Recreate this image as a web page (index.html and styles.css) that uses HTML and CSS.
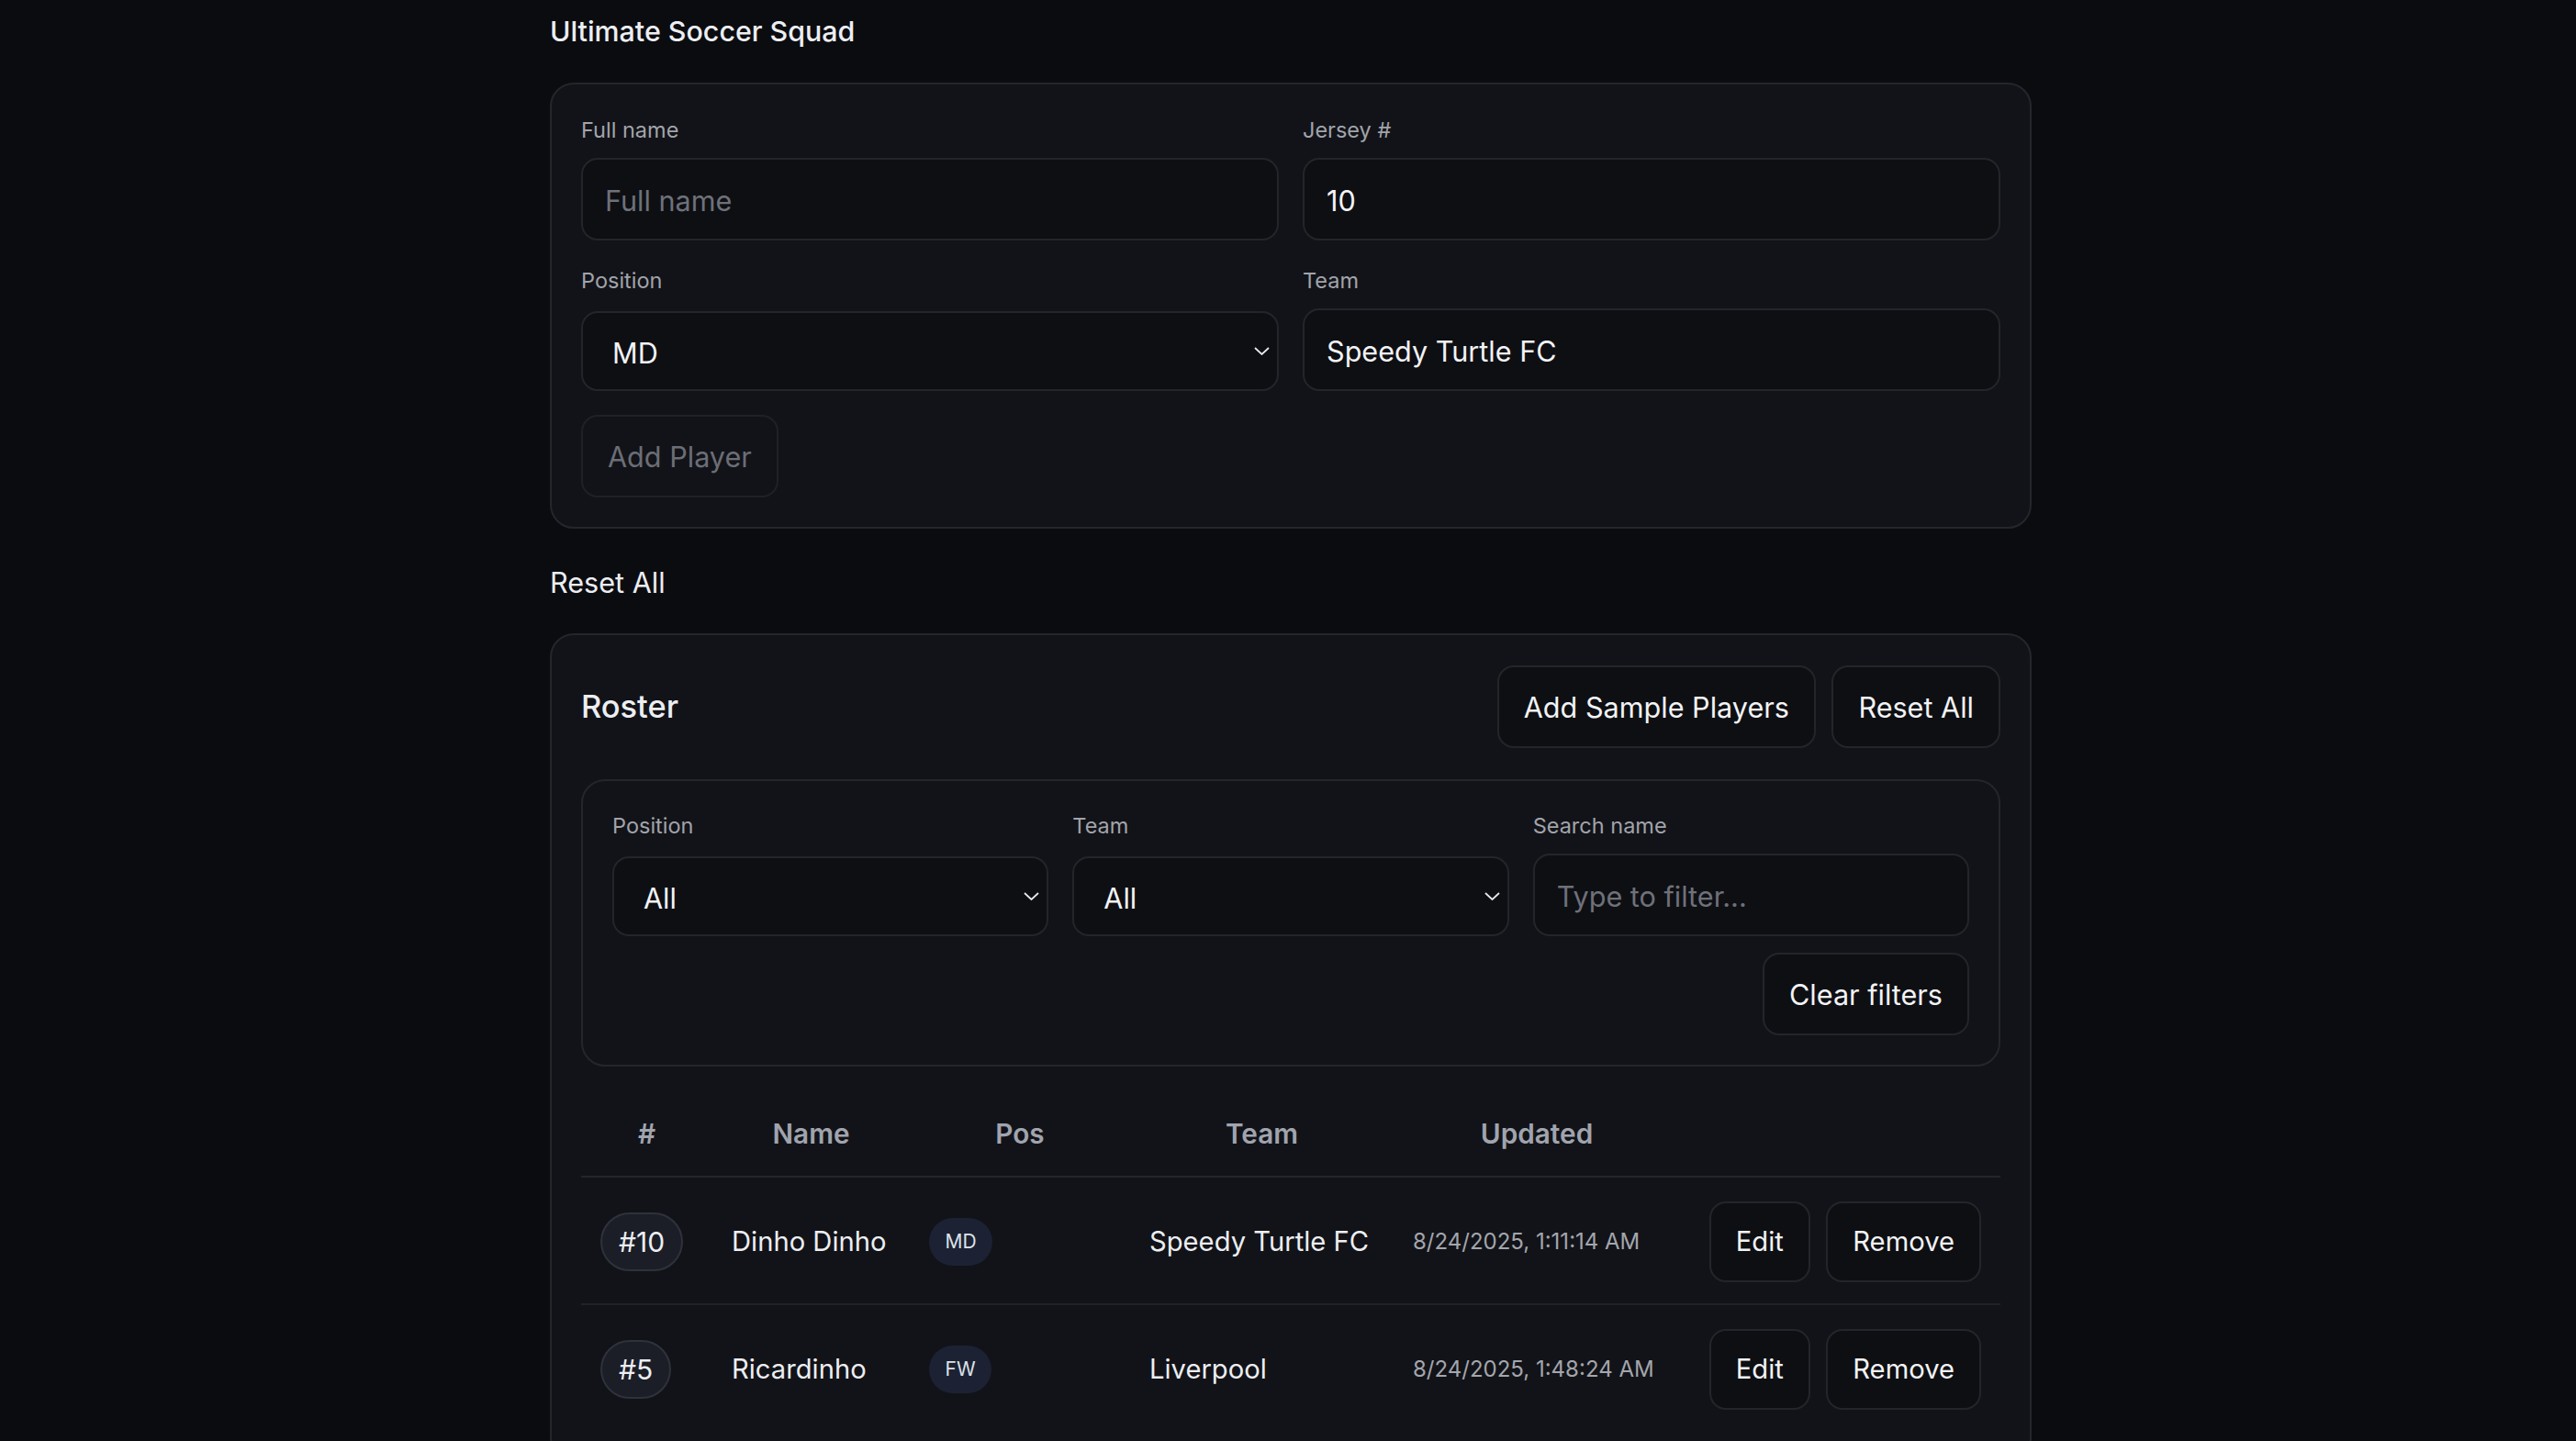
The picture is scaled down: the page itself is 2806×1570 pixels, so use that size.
FILE: index.html
```html
<!DOCTYPE html>
<html lang="en">
<head>
<meta charset="utf-8">
<title>Ultimate Soccer Squad</title>
<link rel="stylesheet" href="styles.css">
</head>
<body>
<div class="app">
  <h1 class="app-title">Ultimate Soccer Squad</h1>

  <form class="card player-form">
    <div class="form-grid">
      <label class="field">
        <span class="field-label">Full name</span>
        <input class="control" type="text" placeholder="Full name">
      </label>
      <label class="field">
        <span class="field-label">Jersey #</span>
        <input class="control" type="text" value="10">
      </label>
      <label class="field">
        <span class="field-label">Position</span>
        <select class="control select"><option>MD</option></select>
      </label>
      <label class="field">
        <span class="field-label">Team</span>
        <input class="control" type="text" value="Speedy Turtle FC">
      </label>
    </div>
    <div class="form-actions">
      <button class="btn" type="button" disabled>Add Player</button>
    </div>
  </form>

  <div class="plain-text">Reset All</div>

  <section class="card roster">
    <div class="roster-header">
      <h2 class="roster-title">Roster</h2>
      <div class="btn-group">
        <button class="btn" type="button">Add Sample Players</button>
        <button class="btn" type="button">Reset All</button>
      </div>
    </div>

    <div class="filters">
      <div class="filter-grid">
        <label class="field">
          <span class="field-label">Position</span>
          <select class="control select"><option>All</option></select>
        </label>
        <label class="field">
          <span class="field-label">Team</span>
          <select class="control select"><option>All</option></select>
        </label>
        <label class="field">
          <span class="field-label">Search name</span>
          <input class="control" type="text" placeholder="Type to filter...">
        </label>
      </div>
      <div class="filter-actions">
        <button class="btn" type="button">Clear filters</button>
      </div>
    </div>

    <table class="roster-table">
      <colgroup>
        <col class="col-num">
        <col class="col-name">
        <col class="col-pos">
        <col class="col-team">
        <col class="col-updated">
        <col class="col-actions">
      </colgroup>
      <thead>
        <tr>
          <th>#</th>
          <th>Name</th>
          <th>Pos</th>
          <th>Team</th>
          <th>Updated</th>
          <th></th>
        </tr>
      </thead>
      <tbody>
        <tr>
          <td><span class="num-badge">#10</span></td>
          <td>Dinho Dinho</td>
          <td><span class="pos-badge">MD</span></td>
          <td>Speedy Turtle FC</td>
          <td class="date">8/24/2025, 1:11:14 AM</td>
          <td><div class="row-actions"><button class="btn btn-row" type="button">Edit</button><button class="btn btn-row" type="button">Remove</button></div></td>
        </tr>
        <tr>
          <td><span class="num-badge">#5</span></td>
          <td>Ricardinho</td>
          <td><span class="pos-badge">FW</span></td>
          <td>Liverpool</td>
          <td class="date">8/24/2025, 1:48:24 AM</td>
          <td><div class="row-actions"><button class="btn btn-row" type="button">Edit</button><button class="btn btn-row" type="button">Remove</button></div></td>
        </tr>
      </tbody>
    </table>
  </section>
</div>
</body>
</html>
```

FILE: styles.css
```css
* {
  box-sizing: border-box;
}

html {
  overflow: hidden;
  background: #0b0c10;
}

body {
  margin: 0;
  background: #0b0c10;
  color: #eceef2;
  font-family: Inter, "Noto Sans", "Liberation Sans", sans-serif;
  font-size: 30.6px;
  line-height: 1.5;
}

.app {
  width: 1614px;
  margin-left: calc(50% - 804px);
}

.app-title {
  margin: 10.5px 0 32.5px;
  font-size: 30.4px;
  line-height: 47px;
  font-weight: 500;
}

.card {
  background: #121318;
  border: 2px solid #24262c;
  border-radius: 26px;
  padding: 33px 32px 32px;
}

.form-grid {
  display: grid;
  grid-template-columns: 1fr 1fr;
  column-gap: 26px;
  row-gap: 27px;
}

.field {
  display: flex;
  flex-direction: column;
  gap: 12.5px;
}

.field-label {
  font-size: 23.5px;
  line-height: 34.5px;
  color: #a1a4ab;
}

.control {
  display: block;
  width: 100%;
  height: 90px;
  margin: 0;
  padding: 2px 24px 0;
  background: #0e0f13;
  border: 2px solid #23252b;
  border-radius: 18px;
  color: #f2f3f5;
  font-family: inherit;
  font-size: 30.6px;
  outline: none;
}

.control::placeholder {
  color: #6e717a;
}

.select {
  appearance: none;
  -webkit-appearance: none;
  height: 87px;
  margin-top: auto;
  padding: 4px 24px 0 32px;
  background-image: url("data:image/svg+xml,%3Csvg xmlns='http://www.w3.org/2000/svg' width='17' height='9' viewBox='0 0 17 9'%3E%3Cpath d='M1 1l7.5 7 7.5-7' fill='none' stroke='%23e5e7eb' stroke-width='1.8'/%3E%3C/svg%3E");
  background-repeat: no-repeat;
  background-position: right 8px center;
  background-size: 17px 9px;
}

.form-actions {
  margin-top: 26px;
  display: flex;
}

.btn {
  height: 90px;
  margin: 0;
  padding: 0 27px;
  background: #0e0f13;
  border: 2px solid #23252b;
  border-radius: 18px;
  color: #f2f3f5;
  font-family: inherit;
  font-size: 30.6px;
  white-space: nowrap;
}

.btn:disabled {
  background: #121318;
  border-color: #1f2126;
  color: #6b6e76;
}

.plain-text {
  margin: 35px 0 32px;
  line-height: 47px;
}

.roster-header {
  display: flex;
  justify-content: space-between;
  align-items: center;
}

.roster-title {
  margin: 0;
  font-size: 34.4px;
  font-weight: 500;
  line-height: 1.2;
}

.btn-group {
  display: flex;
  gap: 17.5px;
}

.filters {
  margin-top: 34px;
  background: #121318;
  border: 2px solid #24262c;
  border-radius: 26px;
  padding: 32px;
}

.filter-grid {
  display: grid;
  grid-template-columns: repeat(3, 1fr);
  column-gap: 26px;
}

.filter-actions {
  display: flex;
  justify-content: flex-end;
  margin-top: 18px;
}

.roster-table {
  width: 100%;
  margin-top: 32.5px;
  border-collapse: collapse;
  table-layout: fixed;
}

.col-num { width: 143px; }
.col-name { width: 215px; }
.col-pos { width: 240px; }
.col-team { width: 287px; }
.col-updated { width: 312px; }

.roster-table th {
  padding: 19.5px 21px 24.5px;
  font-size: 29.75px;
  font-weight: 600;
  line-height: 42px;
  color: #a0a4ae;
  text-align: center;
  border-bottom: 2px solid #23252b;
}

.roster-table td {
  padding: 26px 21px 23px;
  font-size: 29.2px;
  line-height: 42px;
  vertical-align: middle;
  white-space: nowrap;
  border-bottom: 2px solid #202228;
}

.roster-table tbody tr:last-child td {
  border-bottom: none;
}

.roster-table td.date {
  font-size: 24px;
  color: #a3a6ad;
}

.num-badge {
  display: inline-block;
  height: 64px;
  padding: 0 18px;
  line-height: 60px;
  font-size: 30px;
  background: #1b1e27;
  border: 2px solid #2f323b;
  border-radius: 32px;
}

.pos-badge {
  display: inline-block;
  height: 52px;
  padding: 0 17.5px;
  line-height: 52px;
  font-size: 21px;
  color: #dde2ea;
  background: #1c2233;
  border-radius: 26px;
}

.row-actions {
  display: flex;
  justify-content: flex-end;
  gap: 17.5px;
}

.btn-row {
  height: 88px;
  font-size: 29.2px;
}
```
